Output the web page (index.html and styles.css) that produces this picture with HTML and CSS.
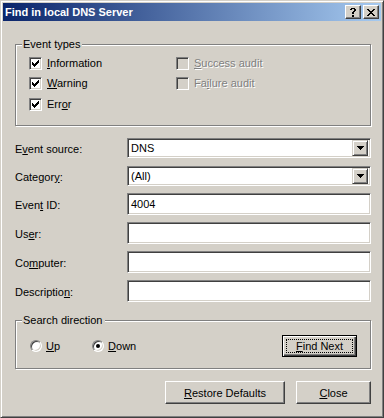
FILE: index.html
```html
<!DOCTYPE html>
<html>
<head>
<meta charset="utf-8">
<link rel="stylesheet" href="styles.css">
</head>
<body>
<div class="window">
  <div class="titlebar">
    <span class="title">Find in local DNS Server</span>
    <div class="tb-buttons">
      <div class="tb-btn help">
        <svg width="6" height="9" viewBox="0 0 6 9" shape-rendering="crispEdges"><path d="M1 0h4v1h-4z M0 1h2v1h-2z M4 1h2v2h-2z M3 3h2v1h-2z M2 4h2v2h-2z M2 7h2v2h-2z" fill="#000"/></svg>
      </div>
      <div class="tb-btn close">
        <svg width="8" height="7" viewBox="0 0 8 7" shape-rendering="crispEdges"><path d="M0 0h2v1h-2z M6 0h2v1h-2z M1 1h2v1h-2z M5 1h2v1h-2z M2 2h4v1h-4z M3 3h2v1h-2z M2 4h4v1h-4z M1 5h2v1h-2z M5 5h2v1h-2z M0 6h2v1h-2z M6 6h2v1h-2z" fill="#000"/></svg>
      </div>
    </div>
  </div>
  <div class="content">
    <div class="group types">
      <span class="legend">Event types</span>
      <div class="types-grid">
        <label class="check"><span class="box"><svg width="7" height="7" viewBox="0 0 7 7" shape-rendering="crispEdges"><path d="M0 2h1v3h-1z M1 3h1v3h-1z M2 4h1v3h-1z M3 3h1v3h-1z M4 2h1v3h-1z M5 1h1v3h-1z M6 0h1v3h-1z" fill="#000"/></svg></span><span class="lbl"><u>I</u>nformation</span></label>
        <label class="check disabled"><span class="box"></span><span class="lbl"><u>S</u>uccess audit</span></label>
        <label class="check"><span class="box"><svg width="7" height="7" viewBox="0 0 7 7" shape-rendering="crispEdges"><path d="M0 2h1v3h-1z M1 3h1v3h-1z M2 4h1v3h-1z M3 3h1v3h-1z M4 2h1v3h-1z M5 1h1v3h-1z M6 0h1v3h-1z" fill="#000"/></svg></span><span class="lbl"><u>W</u>arning</span></label>
        <label class="check disabled"><span class="box"></span><span class="lbl">Fa<u>i</u>lure audit</span></label>
        <label class="check third"><span class="box"><svg width="7" height="7" viewBox="0 0 7 7" shape-rendering="crispEdges"><path d="M0 2h1v3h-1z M1 3h1v3h-1z M2 4h1v3h-1z M3 3h1v3h-1z M4 2h1v3h-1z M5 1h1v3h-1z M6 0h1v3h-1z" fill="#000"/></svg></span><span class="lbl">Err<u>o</u>r</span></label>
      </div>
    </div>

    <div class="form">
      <div class="row combo-row first">
        <span class="flabel">E<u>v</u>ent source:</span>
        <div class="field combo"><span class="val">DNS</span><span class="drop"><svg width="7" height="4" viewBox="0 0 7 4" shape-rendering="crispEdges"><path d="M0 0h7v1h-7z M1 1h5v1h-5z M2 2h3v1h-3z M3 3h1v1h-1z" fill="#000"/></svg></span></div>
      </div>
      <div class="row combo-row">
        <span class="flabel">Categor<u>y</u>:</span>
        <div class="field combo"><span class="val">(All)</span><span class="drop"><svg width="7" height="4" viewBox="0 0 7 4" shape-rendering="crispEdges"><path d="M0 0h7v1h-7z M1 1h5v1h-5z M2 2h3v1h-3z M3 3h1v1h-1z" fill="#000"/></svg></span></div>
      </div>
      <div class="row edit-row">
        <span class="flabel">Even<u>t</u> ID:</span>
        <div class="field edit"><span class="val">4004</span></div>
      </div>
      <div class="row edit-row">
        <span class="flabel">Us<u>e</u>r:</span>
        <div class="field edit"></div>
      </div>
      <div class="row edit-row">
        <span class="flabel">Co<u>m</u>puter:</span>
        <div class="field edit"></div>
      </div>
      <div class="row edit-row">
        <span class="flabel">Descriptio<u>n</u>:</span>
        <div class="field edit"></div>
      </div>
    </div>

    <div class="group direction">
      <span class="legend">Search direction</span>
      <div class="dir-row">
        <label class="radio"><span class="circle"></span><span class="lbl"><u>U</u>p</span></label>
        <label class="radio on"><span class="circle"><span class="dot"></span></span><span class="lbl"><u>D</u>own</span></label>
        <div class="btn default find"><span class="focus"><u>F</u>ind Next</span></div>
      </div>
    </div>

    <div class="actions">
      <div class="btn restore"><u>R</u>estore Defaults</div>
      <div class="btn closebtn"><u>C</u>lose</div>
    </div>
  </div>
</div>
</body>
</html>
```

FILE: styles.css
```css
* { box-sizing: border-box; }
html, body { margin: 0; padding: 0; }
body {
  width: 384px;
  height: 418px;
  background: #D4D0C8;
  font-family: "Liberation Sans", Arial, sans-serif;
  font-size: 11px;
  color: #000;
}
u { text-decoration: underline; text-underline-offset: 1px; }

.window {
  width: 384px;
  height: 418px;
  background: #D4D0C8;
  border: 1px solid;
  border-color: #D4D0C8 #404040 #404040 #D4D0C8;
  box-shadow: inset 1px 1px #fff, inset -1px -1px #808080;
  padding: 2px;
  display: flex;
  flex-direction: column;
}

.titlebar {
  height: 18px;
  background: linear-gradient(to right, #0A246A, #A6CAF0);
  display: flex;
  align-items: center;
  justify-content: space-between;
  padding: 0 2px 0 2px;
}
.title {
  color: #fff;
  font-weight: bold;
  font-size: 11px;
  line-height: 18px;
}
.tb-buttons { display: flex; gap: 2px; }
.tb-btn {
  width: 16px;
  height: 14px;
  background: #D4D0C8;
  border: 1px solid;
  border-color: #fff #404040 #404040 #fff;
  box-shadow: inset -1px -1px #808080, inset 1px 1px #D4D0C8;
  display: flex;
  align-items: center;
  justify-content: center;
}

.content {
  padding: 0 10px 0 12px;
  display: flex;
  flex-direction: column;
}

.group {
  position: relative;
  border: 1px solid #808080;
  box-shadow: inset 1px 1px #fff, 1px 1px #fff;
}
.legend {
  position: absolute;
  top: -8px;
  left: 6px;
  padding: 0 2px 0 1px;
  background: #D4D0C8;
  line-height: 14px;
}

.types {
  margin-top: 23px;
  width: 356px;
  height: 82px;
  padding: 12px 0 0 13px;
}
.types-grid {
  display: grid;
  grid-template-columns: 147px auto;
  grid-auto-rows: 13px;
  row-gap: 7px;
}
.check {
  display: flex;
  align-items: center;
  gap: 5px;
  height: 13px;
  line-height: 13px;
}
.check.third { margin-top: 1px; }
.box {
  width: 13px;
  height: 13px;
  background: #fff;
  border: 1px solid;
  border-color: #808080 #fff #fff #808080;
  box-shadow: inset 1px 1px #404040, inset -1px -1px #D4D0C8;
  display: flex;
  align-items: center;
  justify-content: center;
  flex: none;
}
.check.disabled .box { background: #D4D0C8; }
.check.disabled .lbl { color: #808080; text-shadow: 1px 1px #fff; }

.form {
  margin-top: 12px;
  display: flex;
  flex-direction: column;
  gap: 7px;
}
.row {
  display: flex;
  align-items: center;
}
.row.first { margin-bottom: 1px; }
.flabel {
  width: 112px;
  flex: none;
  padding-top: 2px;
}
.field {
  width: 244px;
  background: #fff;
  border: 1px solid;
  border-color: #808080 #fff #fff #808080;
  box-shadow: inset 1px 1px #404040, inset -1px -1px #D4D0C8;
  padding: 2px;
  display: flex;
  align-items: center;
}
.combo { height: 20px; }
.edit { height: 22px; align-items: flex-start; }
.val { flex: 1; padding-left: 1px; line-height: 14px; }
.edit .val { padding-top: 1px; }
.drop {
  width: 16px;
  height: 16px;
  background: #D4D0C8;
  border: 1px solid;
  border-color: #D4D0C8 #404040 #404040 #D4D0C8;
  box-shadow: inset 1px 1px #fff, inset -1px -1px #808080;
  display: flex;
  align-items: center;
  justify-content: center;
  flex: none;
}

.direction {
  margin-top: 18px;
  width: 356px;
  height: 49px;
  padding: 0 0 0 14px;
}
.dir-row {
  display: flex;
  align-items: center;
  height: 100%;
  padding-top: 2px;
}
.radio {
  display: flex;
  align-items: center;
  gap: 4px;
}
.radio + .radio { margin-left: 32px; }
.circle {
  width: 12px;
  height: 12px;
  border-radius: 50%;
  background: #fff;
  border: 1px solid;
  border-color: #808080 #fff #fff #808080;
  box-shadow: inset 1px 1px #404040, inset -1px -1px #D4D0C8;
  display: flex;
  align-items: center;
  justify-content: center;
  flex: none;
}
.dot { width: 4px; height: 4px; border-radius: 50%; background: #000; }

.btn {
  height: 23px;
  background: #D4D0C8;
  border: 1px solid;
  border-color: #fff #404040 #404040 #fff;
  box-shadow: inset -1px -1px #808080, inset 1px 1px #D4D0C8;
  display: flex;
  align-items: center;
  justify-content: center;
}
.btn.default {
  border: 1px solid #000;
  box-shadow: inset 1px 1px #fff, inset -1px -1px #404040, inset -2px -2px #808080;
  padding: 3px;
}
.find {
  width: 75px;
  height: 22px;
  margin-left: auto;
  margin-right: 13px;
}
.focus {
  flex: 1;
  align-self: stretch;
  border: 1px dotted #000;
  display: flex;
  align-items: center;
  justify-content: center;
  line-height: 12px;
}

.actions {
  margin-top: 12px;
  width: 356px;
  display: flex;
  justify-content: flex-end;
  gap: 11px;
}
.restore { width: 120px; }
.closebtn { width: 75px; }
```
